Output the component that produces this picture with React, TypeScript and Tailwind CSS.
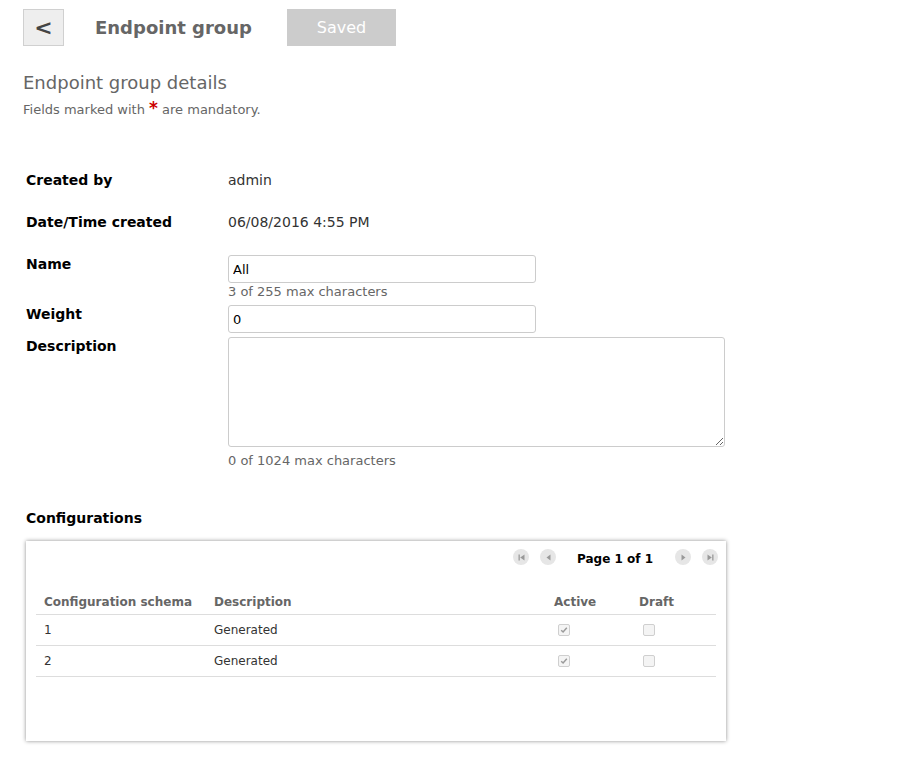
import React from "react";

const font = { fontFamily: '"DejaVu Sans", Verdana, sans-serif' };

const PagerIcon: React.FC<{ dir: "first" | "prev" | "next" | "last" }> = ({ dir }) => (
  <span className="flex h-[16px] w-[16px] items-center justify-center rounded-full bg-[#e6e6e6]">
    <svg width="9" height="9" viewBox="0 0 9 9">
      {dir === "first" && (
        <>
          <rect x="1.5" y="1.5" width="1.3" height="6" fill="#999" />
          <path d="M7.5 1.5 L3.2 4.5 L7.5 7.5 Z" fill="#999" />
        </>
      )}
      {dir === "prev" && <path d="M6.5 1.5 L2.5 4.5 L6.5 7.5 Z" fill="#999" />}
      {dir === "next" && <path d="M2.5 1.5 L6.5 4.5 L2.5 7.5 Z" fill="#999" />}
      {dir === "last" && (
        <>
          <path d="M1.5 1.5 L5.8 4.5 L1.5 7.5 Z" fill="#999" />
          <rect x="6.2" y="1.5" width="1.3" height="6" fill="#999" />
        </>
      )}
    </svg>
  </span>
);

const Check: React.FC<{ checked: boolean }> = ({ checked }) => (
  <span className="flex h-[12px] w-[12px] items-center justify-center rounded-[2px] border border-[#cfcfcf] bg-[#f4f4f4]">
    {checked && (
      <svg width="8" height="8" viewBox="0 0 8 8">
        <path d="M1.2 4.2 L3.1 6 L6.8 1.8" stroke="#9a9a9a" strokeWidth="1.5" fill="none" />
      </svg>
    )}
  </span>
);

const rows = [
  { schema: "1", description: "Generated", active: true, draft: false },
  { schema: "2", description: "Generated", active: true, draft: false },
];

const App: React.FC = () => {
  return (
    <div className="min-h-[763px] w-[898px] bg-white pl-[23px] pt-[9px]" style={font}>
      {/* header */}
      <div className="flex items-center">
        <button className="flex h-[37px] w-[41px] items-center justify-center border border-[#d0d0d0] bg-[#eeeeee] text-[22px] font-bold text-[#444]">
          &lt;
        </button>
        <span className="ml-[31px] text-[18px] font-bold text-[#666]">Endpoint group</span>
        <button className="ml-[35px] h-[37px] w-[109px] bg-[#cccccc] text-[16px] text-white">Saved</button>
      </div>

      <div className="mt-[26px] text-[18px] leading-[22px] text-[#666]">Endpoint group details</div>
      <div className="mt-[6px] text-[13px] leading-[16px] text-[#666]">
        Fields marked with <span className="text-[17px] font-bold text-[#cc0000]">*</span> are mandatory.
      </div>

      {/* form */}
      <div className="ml-[3px] mt-[52px] text-[14px]">
        <div className="flex h-[20px] items-center">
          <span className="w-[202px] font-bold text-black">Created by</span>
          <span className="text-[#333]">admin</span>
        </div>
        <div className="mt-[22px] flex h-[20px] items-center">
          <span className="w-[202px] font-bold text-black">Date/Time created</span>
          <span className="text-[#333]">06/08/2016 4:55 PM</span>
        </div>

        <div className="mt-[23px] flex">
          <span className="w-[202px] pt-[1px] font-bold leading-[16px] text-black">Name</span>
          <div>
            <input
              defaultValue="All"
              className="h-[28px] w-[308px] rounded-[3px] border border-[#cccccc] px-[4px] text-[13px] text-black outline-none"
            />
            <div className="mt-[1px] text-[13px] leading-[16px] text-[#666]">3 of 255 max characters</div>
          </div>
        </div>

        <div className="mt-[5px] flex">
          <span className="w-[202px] pt-[1px] font-bold leading-[16px] text-black">Weight</span>
          <input
            defaultValue="0"
            className="h-[28px] w-[308px] rounded-[3px] border border-[#cccccc] px-[4px] text-[13px] text-black outline-none"
          />
        </div>

        <div className="mt-[4px] flex">
          <span className="w-[202px] pt-[1px] font-bold leading-[16px] text-black">Description</span>
          <div>
            <textarea className="block h-[110px] w-[497px] rounded-[3px] border border-[#cccccc] px-[4px] text-[13px] outline-none" />
            <div className="mt-[6px] text-[13px] leading-[16px] text-[#666]">0 of 1024 max characters</div>
          </div>
        </div>

        <div className="mt-[40px] font-bold leading-[18px] text-black">Configurations</div>

        {/* table card */}
        <div className="mt-[14px] h-[200px] w-[700px] bg-white px-[10px] shadow-[0_0_4px_rgba(0,0,0,0.45)]">
          <div className="flex h-[32px] items-center justify-end">
            <div className="-mr-[2px] flex items-center">
              <PagerIcon dir="first" />
              <span className="ml-[11px]"><PagerIcon dir="prev" /></span>
              <span className="ml-[21px] mr-[22px] mt-[3px] text-[12px] font-bold text-black">Page 1 of 1</span>
              <PagerIcon dir="next" />
              <span className="ml-[11px]"><PagerIcon dir="last" /></span>
            </div>
          </div>
          <table className="mt-[20px] w-[680px] border-collapse text-[12px]">
            <thead>
              <tr className="border-b border-[#dddddd] text-left text-[#666]">
                <th className="h-[21px] w-[178px] pl-[8px] align-top font-bold">Configuration schema</th>
                <th className="w-[340px] align-top font-bold">Description</th>
                <th className="w-[85px] align-top font-bold">Active</th>
                <th className="align-top font-bold">Draft</th>
              </tr>
            </thead>
            <tbody>
              {rows.map((r) => (
                <tr key={r.schema} className="h-[31px] border-b border-[#dddddd] text-[#333]">
                  <td className="pl-[8px]">{r.schema}</td>
                  <td>{r.description}</td>
                  <td>
                    <span className="ml-[4px] inline-block align-middle">
                      <Check checked={r.active} />
                    </span>
                  </td>
                  <td>
                    <span className="ml-[4px] inline-block align-middle">
                      <Check checked={r.draft} />
                    </span>
                  </td>
                </tr>
              ))}
            </tbody>
          </table>
        </div>
      </div>
    </div>
  );
};

export default App;
